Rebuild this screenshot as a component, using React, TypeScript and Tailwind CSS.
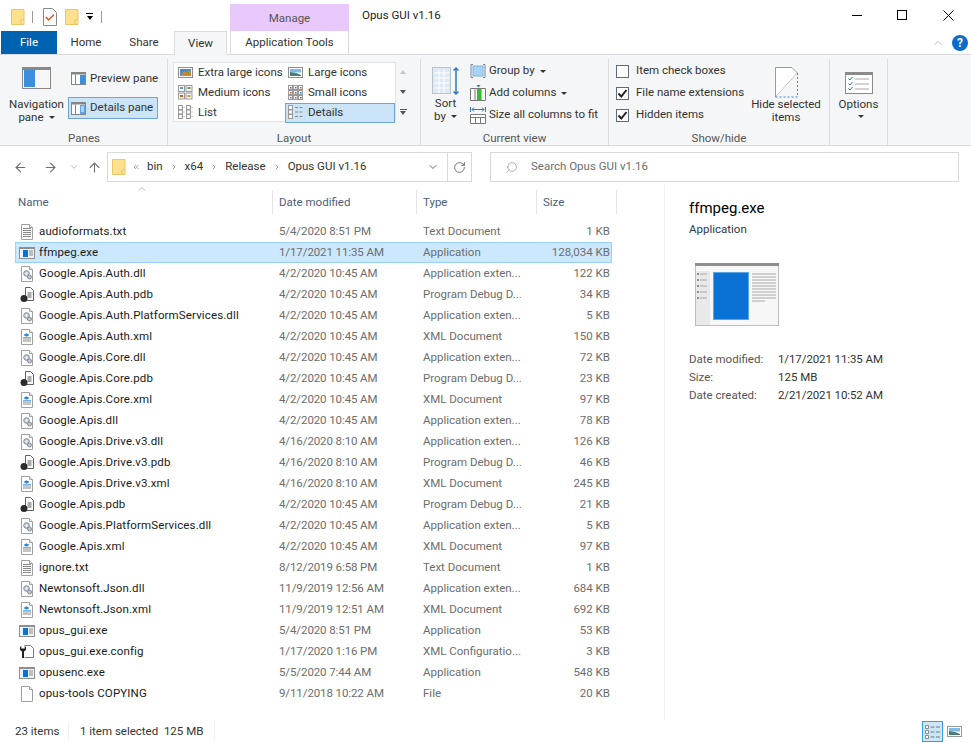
import type { ReactNode } from "react";
import { ArrowLeft, ArrowRight, ArrowUp, ChevronDown, ChevronRight, ChevronUp, ChevronsLeft, RotateCw, Search } from "lucide-react";

type Kind = "txt" | "exe" | "dll" | "pdb" | "xml" | "cfg" | "file";

const files: [string, string, string, string, Kind][] = [
  ["audioformats.txt", "5/4/2020 8:51 PM", "Text Document", "1 KB", "txt"],
  ["ffmpeg.exe", "1/17/2021 11:35 AM", "Application", "128,034 KB", "exe"],
  ["Google.Apis.Auth.dll", "4/2/2020 10:45 AM", "Application exten...", "122 KB", "dll"],
  ["Google.Apis.Auth.pdb", "4/2/2020 10:45 AM", "Program Debug D...", "34 KB", "pdb"],
  ["Google.Apis.Auth.PlatformServices.dll", "4/2/2020 10:45 AM", "Application exten...", "5 KB", "dll"],
  ["Google.Apis.Auth.xml", "4/2/2020 10:45 AM", "XML Document", "150 KB", "xml"],
  ["Google.Apis.Core.dll", "4/2/2020 10:45 AM", "Application exten...", "72 KB", "dll"],
  ["Google.Apis.Core.pdb", "4/2/2020 10:45 AM", "Program Debug D...", "23 KB", "pdb"],
  ["Google.Apis.Core.xml", "4/2/2020 10:45 AM", "XML Document", "97 KB", "xml"],
  ["Google.Apis.dll", "4/2/2020 10:45 AM", "Application exten...", "78 KB", "dll"],
  ["Google.Apis.Drive.v3.dll", "4/16/2020 8:10 AM", "Application exten...", "126 KB", "dll"],
  ["Google.Apis.Drive.v3.pdb", "4/16/2020 8:10 AM", "Program Debug D...", "46 KB", "pdb"],
  ["Google.Apis.Drive.v3.xml", "4/16/2020 8:10 AM", "XML Document", "245 KB", "xml"],
  ["Google.Apis.pdb", "4/2/2020 10:45 AM", "Program Debug D...", "21 KB", "pdb"],
  ["Google.Apis.PlatformServices.dll", "4/2/2020 10:45 AM", "Application exten...", "5 KB", "dll"],
  ["Google.Apis.xml", "4/2/2020 10:45 AM", "XML Document", "97 KB", "xml"],
  ["ignore.txt", "8/12/2019 6:58 PM", "Text Document", "1 KB", "txt"],
  ["Newtonsoft.Json.dll", "11/9/2019 12:56 AM", "Application exten...", "684 KB", "dll"],
  ["Newtonsoft.Json.xml", "11/9/2019 12:51 AM", "XML Document", "692 KB", "xml"],
  ["opus_gui.exe", "5/4/2020 8:51 PM", "Application", "53 KB", "exe"],
  ["opus_gui.exe.config", "1/17/2020 1:16 PM", "XML Configuratio...", "3 KB", "cfg"],
  ["opusenc.exe", "5/5/2020 7:44 AM", "Application", "548 KB", "exe"],
  ["opus-tools COPYING", "9/11/2018 10:22 AM", "File", "20 KB", "file"],
];

function Page({ children }: { children?: ReactNode }) {
  return (
    <>
      <path d="M2.500.5h8l3 3v12h-11z" fill="#fff" stroke="#a0a0a0" />
      <path d="M10.500.5v3h3" fill="#eee" stroke="#a0a0a0" />
      {children}
    </>
  );
}

function FileIcon({ kind }: { kind: Kind }) {
  return (
    <svg width="16" height="16" viewBox="0 0 16 16" className="shrink-0">
      {kind === "txt" && (
        <Page>
          <path d="M4 4.500h8M4 6.500h8M4 8.500h8M4 10.500h8M4 12.500h8" stroke="#8a8a8a" />
        </Page>
      )}
      {kind === "file" && <Page />}
      {kind === "exe" && (
        <>
          <rect x=".5" y="2.500" width="15" height="11" fill="#eef2f6" stroke="#8f8f8f" />
          <rect x="1" y="3" width="14" height="1" fill="#8f8f8f" />
          <rect x="4" y="5" width="5" height="7" fill="#0a72d4" />
          <path d="M10 6h4M10 8h4M10 10h4" stroke="#8a8a8a" />
        </>
      )}
      {kind === "dll" && (
        <Page>
          <circle cx="7.500" cy="7.500" r="2.800" fill="#c3d0dc" stroke="#7f8c98" />
          <circle cx="7.500" cy="7.500" r="1" fill="#fff" />
          <circle cx="10.500" cy="11" r="2" fill="#c6ccd2" stroke="#7f8c98" />
        </Page>
      )}
      {kind === "pdb" && (
        <>
          <path d="M6.500.5h5l3 3v10h-8z" fill="#fff" stroke="#5f5f5f" />
          <path d="M8.500 6h4M8.500 8h4M8.500 10h4" stroke="#555" />
          <circle cx="5" cy="11.500" r="3.500" fill="#2b2b2b" />
        </>
      )}
      {kind === "xml" && (
        <Page>
          <path d="M4.500 6 7.500 4.200 10.500 6 7.500 7.800z" fill="#2f86d8" />
          <path d="M4 10h8M4 12h8" stroke="#8a8a8a" />
          <path d="M4 8.500h8" stroke="#6fb2ea" />
        </Page>
      )}
      {kind === "cfg" && (
        <>
          <path d="M5.500 1.500h6l3 3v9h-9" fill="#fff" stroke="#7a7a7a" />
          <path d="M1 3v3l2 1.500v6.500h2V7.500L7 6V3L5.700 2v2.500H2.300V2z" fill="#222" />
        </>
      )}
    </svg>
  );
}

function Pane({ active }: { active?: boolean }) {
  return (
    <svg width="15" height="13" viewBox="0 0 15 13" className="mr-[2px] shrink-0">
      <rect x=".5" y=".5" width="14" height="12" fill="#fff" stroke="#858585" />
      <rect x="1" y="1" width="13" height="1.500" fill="#858585" />
      <path d="M4.500 2.500v10" stroke="#858585" />
      <rect x="9" y="3" width="5" height="9" fill={active ? "#62a5e6" : "#3b8fdc"} />
      {active && <path d="M10 5h3M10 7h3M10 9h3" stroke="#fff" />}
    </svg>
  );
}

function LayoutIcon({ name }: { name: string }) {
  const grid = (cols: number, rows: number, w: number, h: number, gx: number, gy: number) => {
    const out = [];
    for (let r = 0; r < rows; r++)
      for (let c = 0; c < cols; c++)
        out.push(
          <rect key={`${r}-${c}`} x={0.5 + c * gx} y={0.5 + r * gy} width={w} height={h} fill="#f7f7f7" stroke="#9a9a9a" />,
        );
    return out;
  };
  return (
    <svg width="16" height="16" viewBox="0 0 16 16" className="shrink-0">
      {name === "xl" && (
        <>
          <rect x=".5" y="2.500" width="14" height="10" fill="#fff" stroke="#8e8e8e" />
          <rect x="2" y="4" width="11" height="7" fill="#4a89c8" />
          <path d="M2 11l4-5 3 2 2-3 2 2v4z" fill="#d9822b" />
          <rect x="8" y="6" width="3" height="3" fill="#7ba33c" />
        </>
      )}
      {name === "lg" && (
        <>
          <rect x=".5" y="2.500" width="14" height="10" fill="#fff" stroke="#8e8e8e" />
          <rect x="2" y="4" width="11" height="3.500" fill="#7dbbe8" />
          <path d="M2 7l6 1 5 2v1H2z" fill="#4a7c78" />
        </>
      )}
      {name === "md" && (
        <>
          {grid(2, 2, 6, 6, 7.5, 7.5)}
          <rect x="2" y="2" width="3" height="2" fill="#5d9ed8" />
          <rect x="9.500" y="2" width="3" height="2" fill="#6aa04a" />
          <rect x="2" y="10" width="3" height="2" fill="#c95b2c" />
          <rect x="9.500" y="10" width="3" height="2" fill="#d49a2a" />
        </>
      )}
      {name === "sm" && (
        <>
          {grid(3, 3, 4, 4, 5, 5)}
          <rect x="2" y="2" width="1.500" height="1.500" fill="#666" />
          <rect x="7" y="2" width="1.500" height="1.500" fill="#3d7fc4" />
          <rect x="12" y="2" width="1.500" height="1.500" fill="#c95b2c" />
          <rect x="2" y="7" width="1.500" height="1.500" fill="#c95b2c" />
          <rect x="7" y="7" width="1.500" height="1.500" fill="#666" />
          <rect x="12" y="7" width="1.500" height="1.500" fill="#3d7fc4" />
          <rect x="2" y="12" width="1.500" height="1.500" fill="#3d7fc4" />
          <rect x="7" y="12" width="1.500" height="1.500" fill="#c95b2c" />
          <rect x="12" y="12" width="1.500" height="1.500" fill="#666" />
        </>
      )}
      {name === "ls" && (
        <>
          {grid(1, 3, 4, 4, 5, 4.5)}
          <g transform="translate(8 0)">{grid(1, 3, 4, 4, 5, 4.5)}</g>
          <path d="M5.500 2.500h1M5.500 7h1M5.500 11.500h1M13.500 2.500h1M13.500 7h1M13.500 11.500h1" stroke="#999" />
        </>
      )}
      {name === "dt" && (
        <>
          {grid(1, 3, 4, 4, 5, 4.5)}
          <path d="M7 2.500h3M11.500 2.500h3M7 7h3M11.500 7h3M7 11.500h3M11.500 11.500h3" stroke="#8a8a8a" />
        </>
      )}
    </svg>
  );
}

function Caret() {
  return <span className="ml-[5px] inline-block h-0 w-0 border-x-[3px] border-t-[3px] border-x-transparent border-t-[#333] align-middle" />;
}

function Group({ width, label, children }: { width: string; label: string; children: ReactNode }) {
  return (
    <div className={`${width} flex h-[87px] shrink-0 flex-col border-r border-[#dcdcdc]`}>
      <div className="flex h-[75px] flex-1">{children}</div>
      <div className="h-[15px] text-center leading-[15px] text-[#555]">{label}</div>
    </div>
  );
}

function LayoutItem({ icon, label, on }: { icon: string; label: string; on?: boolean }) {
  return (
    <div
      className={`flex h-5 items-center whitespace-nowrap border pl-[2px] ${
        on ? "border-[#6ea5db] bg-[#cce4f7]" : "border-transparent"
      }`}
    >
      <LayoutIcon name={icon} />
      <span className="ml-[4px]">{label}</span>
    </div>
  );
}

function Check({ on, label }: { on?: boolean; label: string }) {
  return (
    <div className="flex h-[22px] items-center whitespace-nowrap">
      <span className="flex h-[13px] w-[13px] items-center justify-center border border-[#5f6b7a] bg-white">
        {on && (
          <svg width="11" height="11" viewBox="0 0 11 11">
            <path d="M1.500 5.500 4.300 8.500 9.500 2" fill="none" stroke="#222" strokeWidth="2" />
          </svg>
        )}
      </span>
      <span className="ml-[7px]">{label}</span>
    </div>
  );
}

function Folder() {
  return (
    <svg width="14" height="18" viewBox="0 0 14 18" className="shrink-0">
      <path d="M.5 1.500h12.500v15H.5z" fill="#ffe08c" stroke="#e8c766" />
      <path d="M10 16v-4h3" fill="#fff4c9" stroke="#e0bd5c" />
    </svg>
  );
}

function Crumb({ label, last }: { label: string; last?: boolean }) {
  return (
    <>
      <span className="ml-[7px]">{label}</span>
      {!last && <ChevronRight size={8} strokeWidth={2.500} color="#888" className="ml-[7px]" />}
    </>
  );
}

export default function App() {
  return (
    <div className="flex h-[743px] w-[971px] flex-col overflow-hidden bg-white font-['Roboto',sans-serif] text-[11.5px] text-[#333]">
      {/* title bar */}
      <div className="flex h-[31px] shrink-0">
        <div className="flex w-[230px] items-center pl-[11px] pt-[2px]">
          <Folder />
          <span className="ml-[7px] h-[12px] w-px bg-[#999]" />
          <svg width="14" height="18" viewBox="0 0 14 18" className="ml-[10px]">
            <path d="M.5.5h9l4 4v13H.5z" fill="#fff" stroke="#8a8a8a" />
            <path d="M3 9l2.500 3L11 6.500" fill="none" stroke="#e25a1c" strokeWidth="1.500" />
          </svg>
          <span className="ml-[8px]"><Folder /></span>
          <span className="ml-[7px] flex flex-col items-center">
            <span className="mb-[2px] h-px w-[7px] bg-black" />
            <span className="h-0 w-0 border-x-[3.500px] border-t-[4px] border-x-transparent border-t-black" />
          </span>
          <span className="ml-[8px] h-[12px] w-px bg-[#999]" />
        </div>
        <div className="mt-1 flex h-[27px] w-[119px] items-center justify-center bg-[#e9c9fb] pt-[2px] text-[#555]">Manage</div>
        <div className="ml-[13px] flex-1 pt-[7px] text-[#222]">Opus GUI v1.16</div>
        <div className="flex w-[135px] items-start pt-[10px]">
          <span className="ml-[16px] mt-[5px] h-px w-[10px] bg-black" />
          <span className="ml-[35px] h-[10px] w-[10px] border border-black" />
          <svg width="11" height="11" viewBox="0 0 11 11" className="ml-[36px]">
            <path d="M.5.500l10 10M10.500.500l-10 10" stroke="#000" />
          </svg>
        </div>
      </div>

      {/* tabs */}
      <div className="relative z-10 -mb-px flex h-6 shrink-0 items-stretch pl-px">
        <div className="flex h-[23px] w-[56px] items-center justify-center bg-[#0063b1] pt-px text-white">File</div>
        <div className="flex h-[23px] w-[58px] items-center justify-center pt-px">Home</div>
        <div className="flex h-[23px] w-[58px] items-center justify-center pt-px">Share</div>
        <div className="ml-px flex h-6 w-[53px] items-center justify-center border-x border-t border-[#dadbdc] bg-[#f5f6f7] pt-px">View</div>
        <div className="ml-[3px] flex h-[23px] w-[119px] items-center justify-center border-x border-[#dadbdc] pt-px">Application Tools</div>
        <div className="ml-auto mr-[3px] flex h-[23px] items-center">
          <ChevronUp size={14} strokeWidth={1} color="#999" className="mr-[7px]" />
          <span className="flex h-4 w-4 items-center justify-center rounded-full bg-[#0a6ccb] text-[12px] font-bold text-white">?</span>
        </div>
      </div>

      {/* ribbon */}
      <div className="flex h-[92px] shrink-0 border-y border-[#dadbdc] bg-[#f5f6f7] pl-px pt-[4px]">
        <Group width="w-[167px]" label="Panes">
          <div className="ml-[4px] flex w-[63px] flex-col items-center pt-[8px] leading-[13px]">
            <svg width="29" height="22" viewBox="0 0 29 22" className="shrink-0">
              <rect x=".5" y=".5" width="28" height="21" fill="#f7f7f7" stroke="#888" />
              <rect x="1" y="1" width="27" height="2" fill="#888" />
              <rect x="2" y="3" width="11" height="17" fill="#3b8fdc" />
            </svg>
            <span className="mt-[9px]">Navigation</span>
            <span>pane<Caret /></span>
          </div>
          <div className="flex flex-col pt-[9px]">
            <div className="flex h-[21px] items-center border border-transparent pl-[2px]">
              <Pane />
              <span className="ml-[2px]">Preview pane</span>
            </div>
            <div className="mt-[8px] flex h-[22px] w-[90px] items-center border border-[#6ea5db] bg-[#cce4f7] pl-[2px]">
              <Pane active />
              <span className="ml-[2px]">Details pane</span>
            </div>
          </div>
        </Group>
        <Group width="w-[253px]" label="Layout">
          <div className="ml-[5px] mt-[3px] flex h-[60px] w-[237px]">
            <div className="flex w-[223px] border border-[#e2e3e4] bg-white">
              <div className="w-[111px] pl-px">
                <LayoutItem icon="xl" label="Extra large icons" />
                <LayoutItem icon="md" label="Medium icons" />
                <LayoutItem icon="ls" label="List" />
              </div>
              <div className="w-[110px]">
                <LayoutItem icon="lg" label="Large icons" />
                <LayoutItem icon="sm" label="Small icons" />
                <LayoutItem icon="dt" label="Details" on />
              </div>
            </div>
            <div className="flex w-[14px] flex-col text-[#555]">
              <span className="flex h-5 items-center justify-center"><span className="h-0 w-0 border-x-[3.500px] border-b-[4px] border-x-transparent border-b-[#c4c4c4]" /></span>
              <span className="flex h-5 items-center justify-center"><span className="h-0 w-0 border-x-[3.500px] border-t-[4px] border-x-transparent border-t-[#555]" /></span>
              <span className="flex h-5 flex-col items-center justify-center">
                <span className="mb-px h-px w-[7px] bg-[#555]" />
                <span className="h-0 w-0 border-x-[3.500px] border-t-[4px] border-x-transparent border-t-[#555]" />
              </span>
            </div>
          </div>
        </Group>
        <Group width="w-[188px]" label="Current view">
          <div className="ml-[10px] flex w-[29px] flex-col items-center pt-[7px] leading-[13px]">
            <svg width="27" height="30" viewBox="0 0 27 30" className="shrink-0">
              <rect x=".5" y="1.500" width="18" height="26" fill="#dfe9f2" stroke="#b9c4ce" />
              <path d="M2 7h15M2 12h15M2 17h15M2 22h15M7 3v24M12 3v24" stroke="#fff" />
              <path d="M24 2v26M21.500 4.500 24 2l2.500 2.500M21.500 25.500 24 28l2.500-2.500" fill="none" stroke="#2f78c0" strokeWidth="1.500" />
            </svg>
            <span className="mt-px">Sort</span>
            <span>by<Caret /></span>
          </div>
          <div className="ml-[10px] flex flex-col whitespace-nowrap pt-px">
            <div className="flex h-[22px] items-center">
              <svg width="16" height="16" viewBox="0 0 16 16">
                <path d="M3 1.500H1v13h2M13 1.500h2v13h-2" fill="none" stroke="#7b8794" />
                <rect x="3" y="3" width="10" height="10" fill="#a9d3f5" stroke="#7cb4e4" />
              </svg>
              <span className="ml-[3px]">Group by<Caret /></span>
            </div>
            <div className="flex h-[22px] items-center">
              <svg width="16" height="16" viewBox="0 0 16 16">
                <path d="M.5 3.500h15v12H.5zM5 3.500v12M11 3.500v12" fill="#fff" stroke="#777" />
                <rect x="7" y="4" width="4" height="11" fill="#2fc22f" />
                <path d="M6.500 0h4L8.500 2.500z" fill="#2f78c0" />
              </svg>
              <span className="ml-[3px]">Add columns<Caret /></span>
            </div>
            <div className="flex h-[22px] items-center">
              <svg width="16" height="17" viewBox="0 0 16 17">
                <path d="M.5 0v5M15.500 0v5M2 2.500h12M4 .5 2 2.500l2 2M12 .5l2 2-2 2" fill="none" stroke="#2f78c0" />
                <path d="M.5 7.500h15v9H.5zM.5 10.500h15M5.500 10.500v6M10.500 10.500v6" fill="#fff" stroke="#777" />
              </svg>
              <span className="ml-[3px]">Size all columns to fit</span>
            </div>
          </div>
        </Group>
        <Group width="w-[221px]" label="Show/hide">
          <div className="ml-[7px] flex w-[135px] flex-col pt-px">
            <Check label="Item check boxes" />
            <Check on label="File name extensions" />
            <Check on label="Hidden items" />
          </div>
          <div className="flex w-[70px] flex-col items-center whitespace-nowrap pt-[8px] leading-[13px]">
            <svg width="23" height="31" viewBox="0 0 23 31" className="shrink-0">
              <path d="M.5 30V.5H17L22.500 6" fill="#fff" stroke="#9a9a9a" />
              <path d="M.5 30 22.500 6" stroke="#9a9a9a" />
              <path d="M.5 30h22V6z" fill="#f5f6f7" />
              <path d="M.5 30h22V6" fill="none" stroke="#2f86d8" strokeDasharray="2 2" />
            </svg>
            <span>Hide selected</span>
            <span>items</span>
          </div>
        </Group>
        <Group width="w-[58px]" label="">
          <div className="flex w-full flex-col items-center pt-[13px] leading-[13px]">
            <svg width="28" height="22" viewBox="0 0 28 22" className="shrink-0">
              <rect x=".5" y=".5" width="27" height="21" fill="#fff" stroke="#8a8a8a" />
              <rect x="1" y="1" width="26" height="2" fill="#8a8a8a" />
              <path d="M3.500 6.500 5 8l2.500-3M3.500 11.500 5 13l2.500-3M3.500 16.500 5 18l2.500-3" fill="none" stroke="#2f78c0" />
              <path d="M10 7h14M10 12h14M10 17h14" stroke="#a8a8a8" />
            </svg>
            <span className="mt-[4px]">Options</span>
            <span className="-mt-px"><Caret /></span>
          </div>
        </Group>
      </div>

      {/* address bar */}
      <div className="h-[39px] shrink-0 pt-[6px] text-[#333]">
        <div className="flex h-[30px] items-center">
          <ArrowLeft size={15} strokeWidth={1.700} color="#707070" className="ml-[13px]" />
          <ArrowRight size={15} strokeWidth={1.700} color="#707070" className="ml-[15px]" />
          <ChevronDown size={10} strokeWidth={1.500} color="#888" className="ml-[11px]" />
          <ArrowUp size={15} strokeWidth={1.700} color="#707070" className="ml-[8px]" />
          <div className="ml-[5px] flex h-[30px] w-[365px] items-center border border-[#d9d9d9] pl-[4px]">
            <Folder />
            <ChevronsLeft size={8} strokeWidth={2} color="#777" className="ml-[6px]" />
            <Crumb label="bin" />
            <Crumb label="x64" />
            <Crumb label="Release" />
            <Crumb label="Opus GUI v1.16" last />
            <ChevronDown size={12} strokeWidth={2} color="#666" className="ml-auto mr-[8px]" />
            <span className="flex h-full w-[24px] items-center justify-center border-l border-[#d9d9d9]">
              <RotateCw size={13} strokeWidth={1.700} color="#666" />
            </span>
          </div>
          <div className="ml-[18px] flex h-[30px] w-[469px] items-center border border-[#d9d9d9] pl-[14px] text-[#6d6d6d]">
            <Search size={13} strokeWidth={1} color="#777" className="-scale-x-100" />
            <span className="ml-[13px]">Search Opus GUI v1.16</span>
          </div>
        </div>
      </div>

      {/* content */}
      <div className="flex min-h-0 flex-1">
        <div className="w-[665px] shrink-0 border-r border-[#f0f0f0] pt-[4px]">
          <div className="relative ml-[15px] grid h-[26px] w-[602px] grid-cols-[258px_144px_120px_80px] pt-px text-[#4c607a]">
            <span className="absolute left-[121px] -top-[6px]"><ChevronUp size={12} strokeWidth={1} color="#777" /></span>
            <div className="flex items-center border-r border-[#e5e5e5] pl-[3px]">Name</div>
            <div className="flex items-center border-r border-[#e5e5e5] pl-[6px]">Date modified</div>
            <div className="flex items-center border-r border-[#e5e5e5] pl-[6px]">Type</div>
            <div className="flex items-center border-r border-[#e5e5e5] pl-[6px]">Size</div>
          </div>
          <div className="ml-[15px] mt-[6px] w-[597px]">
            {files.map(([name, date, type, size, kind]) => (
              <div
                key={name}
                className={`grid h-[21px] grid-cols-[257px_144px_120px_76px] items-center whitespace-nowrap border text-[#6d6d6d] ${
                  name === "ffmpeg.exe" ? "border-[#99d1ff] bg-[#cce8ff]" : "border-transparent"
                }`}
              >
                <div className="flex items-center pl-[3px] text-[#1a1a1a]">
                  <FileIcon kind={kind} />
                  <span className="ml-[4px] tracking-[0.13px]">{name}</span>
                </div>
                <div className="pl-[6px] tracking-[-0.1px]">{date}</div>
                <div className="pl-[6px]">{type}</div>
                <div className="pr-[3px] text-right">{size}</div>
              </div>
            ))}
          </div>
        </div>

        {/* preview pane */}
        <div className="flex-1 pl-[24px] pt-[13px]">
          <div className="text-[15px] leading-[20px] text-black">ffmpeg.exe</div>
          <div className="mt-[3px] text-[#2b3a4f]">Application</div>
          <svg width="84" height="63" viewBox="0 0 84 63" className="ml-[6px] mt-[25px]">
            <rect width="84" height="63" fill="#f7f7f7" />
            <rect x=".5" y=".5" width="83" height="62" fill="none" stroke="#bdbdbd" />
            <rect width="84" height="3" fill="#8f8f8f" />
            <rect x="1" y="8" width="14" height="54" fill="#e9e9e9" />
            <rect x="18.500" y="9.500" width="35" height="47" fill="#0a72d4" stroke="#5aa5e6" />
            <path d="M5 11h7M5 17h7M5 23h7M5 29h7M5 35h7" stroke="#a8a8a8" />
            <path d="M2 10h2v2H2zM2 16h2v2H2zM2 22h2v2H2zM2 28h2v2H2zM2 34h2v2H2z" fill="#8f8f8f" />
            <path d="M57 11h24M57 14h24M57 17h24M57 20h24M57 23h24M57 26h24M57 29h24M57 32h24M57 35h24M57 38h13" stroke="#a8a8a8" />
          </svg>
          <div className="mt-[24px] grid grid-cols-[89px_auto] whitespace-nowrap leading-[18px]">
            <span className="text-[#555]">Date modified:</span>
            <span className="tracking-[-0.1px] text-[#333]">1/17/2021 11:35 AM</span>
            <span className="text-[#555]">Size:</span>
            <span className="text-[#333]">125 MB</span>
            <span className="text-[#555]">Date created:</span>
            <span className="tracking-[-0.1px] text-[#333]">2/21/2021 10:52 AM</span>
          </div>
        </div>
      </div>

      {/* status bar */}
      <div className="flex h-[23px] shrink-0 items-center text-[#333]">
        <span className="ml-[15px] w-[54px] border-r border-[#efefef]">23 items</span>
        <span className="ml-[11px] w-[135px] border-r border-[#efefef]">1 item selected&nbsp;&nbsp;125 MB</span>
        <span className="ml-auto flex h-[21px] w-[21px] items-center justify-center border border-[#2fa4dc] bg-[#cce8f8]">
          <svg width="16" height="14" viewBox="0 0 16 14">
            <path d="M.5.500h3v3h-3zM.5 5.500h3v3h-3zM.5 10.500h3v3h-3z" fill="#fff" stroke="#888" />
            <path d="M5.500 2h4M11 2h4M5.500 7h4M11 7h4M5.500 12h4M11 12h4" stroke="#777" />
          </svg>
        </span>
        <svg width="15" height="11" viewBox="0 0 15 11" className="ml-[4px] mr-[9px]">
          <rect x=".5" y=".5" width="14" height="10" fill="#fff" stroke="#999" />
          <rect x="2" y="2" width="11" height="3.500" fill="#7dbbe8" />
          <path d="M2 5l6 1 5 2v1H2z" fill="#4a7c78" />
        </svg>
      </div>
    </div>
  );
}
